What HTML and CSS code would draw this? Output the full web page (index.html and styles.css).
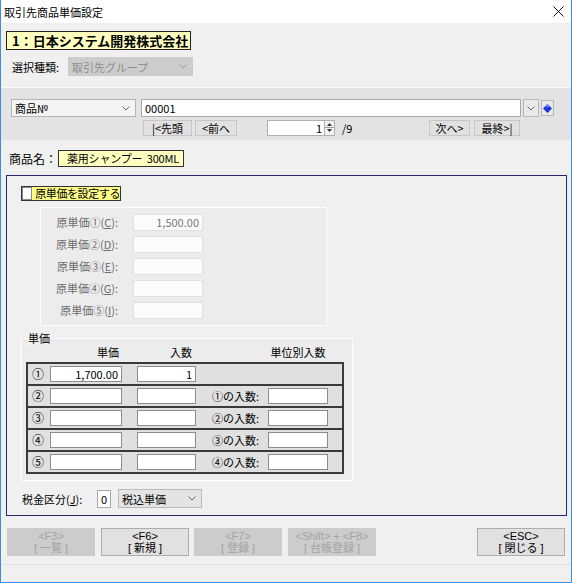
FILE: index.html
```html
<!DOCTYPE html>
<html lang="ja">
<head>
<meta charset="utf-8">
<title>取引先商品単価設定</title>
<link rel="stylesheet" href="styles.css">
</head>
<body>
<div class="win">
  <div class="titlebar">
    <span class="title">取引先商品単価設定</span>
    <svg class="close" width="11" height="11" viewBox="0 0 11 11"><path d="M0.5 0.5 L10.5 10.5 M10.5 0.5 L0.5 10.5" stroke="#111" stroke-width="1" fill="none"/></svg>
  </div>
  <div class="body">
    <div class="company">1：日本システム開発株式会社</div>
    <div class="selrow">
      <span class="sel-label">選択種類:</span>
      <div class="combo combo-dis"><span>取引先グループ</span><svg class="chev" width="8" height="5" viewBox="0 0 8 5"><polyline points="0.5,0.5 4,4 7.5,0.5" fill="none" stroke="#9a9a9a"/></svg></div>
    </div>
    <div class="navpanel">
      <div class="navrow1">
        <div class="combo combo-prod"><span>商品№</span><svg class="chev" width="8" height="5" viewBox="0 0 8 5"><polyline points="0.5,0.5 4,4 7.5,0.5" fill="none" stroke="#666"/></svg></div>
        <div class="code-input">00001</div>
        <div class="ddbtn"><svg width="8" height="5" viewBox="0 0 8 5"><polyline points="0.5,0.5 4,4 7.5,0.5" fill="none" stroke="#666"/></svg></div>
        <div class="diabtn"><svg width="9" height="9" viewBox="0 0 9 9"><polygon points="4.5,0 9,4.5 4.5,9 0,4.5" fill="#1a36d4"/><polygon points="4.5,0 6.5,2 4.5,3.5 2.5,2" fill="#6f8cff"/></svg></div>
      </div>
      <div class="navrow2">
        <div class="nbtn w49">|&lt;先頭</div>
        <div class="nbtn w42 ml3">&lt;前へ</div>
        <div class="numbox">
          <div class="numval">1</div>
          <div class="spin">
            <svg width="9" height="13" viewBox="0 0 9 13"><polygon points="4.5,2 7,5 2,5" fill="#333"/><line x1="0" y1="6.5" x2="9" y2="6.5" stroke="#999"/><polygon points="2,8 7,8 4.5,11" fill="#333"/></svg>
          </div>
        </div>
        <span class="total">/9</span>
        <div class="nbtn w41 ml67">次へ&gt;</div>
        <div class="nbtn w46 ml4">最終&gt;|</div>
      </div>
    </div>
    <div class="prodrow">
      <span class="prod-label">商品名：</span>
      <div class="prodname">薬用シャンプー&nbsp;&nbsp;300ML</div>
    </div>
    <div class="mainpanel">
      <div class="chk"><span class="box"></span><span class="chk-text">原単価を設定する</span></div>
      <div class="origgrp">
        <span class="olabel">原単価①(<u>C</u>):</span><div class="oinput">1,500.00</div>
        <span class="olabel">原単価②(<u>D</u>):</span><div class="oinput"></div>
        <span class="olabel">原単価③(<u>E</u>):</span><div class="oinput"></div>
        <span class="olabel">原単価④(<u>G</u>):</span><div class="oinput"></div>
        <span class="olabel">原単価⑤(<u>I</u>):</span><div class="oinput"></div>
      </div>
      <div class="tanka">
        <span class="legend">単価</span>
        <div class="thead">
          <span class="h1">単価</span>
          <span class="h2">入数</span>
          <span class="h3">単位別入数</span>
        </div>
        <div class="ttable">
          <div class="trow">
            <span class="num">①</span>
            <div class="tin in1">1,700.00</div>
            <div class="tin in2">1</div>
          </div>
          <div class="trow">
            <span class="num">②</span>
            <div class="tin in1"></div>
            <div class="tin in2"></div>
            <span class="tlabel">①の入数:</span>
            <div class="tin in3"></div>
          </div>
          <div class="trow">
            <span class="num">③</span>
            <div class="tin in1"></div>
            <div class="tin in2"></div>
            <span class="tlabel">②の入数:</span>
            <div class="tin in3"></div>
          </div>
          <div class="trow">
            <span class="num">④</span>
            <div class="tin in1"></div>
            <div class="tin in2"></div>
            <span class="tlabel">③の入数:</span>
            <div class="tin in3"></div>
          </div>
          <div class="trow">
            <span class="num">⑤</span>
            <div class="tin in1"></div>
            <div class="tin in2"></div>
            <span class="tlabel">④の入数:</span>
            <div class="tin in3"></div>
          </div>
        </div>
      </div>
      <div class="taxrow">
        <span class="tax-label">税金区分(<u>J</u>):</span>
        <div class="taxcode">0</div>
        <div class="combo combo-tax"><span>税込単価</span><svg class="chev" width="8" height="5" viewBox="0 0 8 5"><polyline points="0.5,0.5 4,4 7.5,0.5" fill="none" stroke="#666"/></svg></div>
      </div>
    </div>
    <div class="buttons">
      <div class="btn dis"><span>&lt;F3&gt;</span><span>[ 一覧 ]</span></div>
      <div class="btn"><span>&lt;F6&gt;</span><span>[ 新規 ]</span></div>
      <div class="btn dis gap5"><span>&lt;F7&gt;</span><span>[ 登録 ]</span></div>
      <div class="btn dis"><span>&lt;Shift&gt; + &lt;F8&gt;</span><span>[ 台帳登録 ]</span></div>
      <div class="btn esc"><span>&lt;ESC&gt;</span><span>[ 閉じる ]</span></div>
    </div>
    <div class="status"></div>
  </div>
</div>
</body>
</html>
```

FILE: styles.css
```css
* { box-sizing: border-box; }
html, body { margin: 0; padding: 0; }
body {
  font-family: "Noto Sans CJK JP", "Liberation Sans", sans-serif;
  font-size: 11px;
  color: #000;
  background: #f0f0f0;
}
.win {
  width: 572px;
  height: 583px;
  border: 1px solid #3b8fde;
  border-top: none;
  display: flex;
  flex-direction: column;
  background: #f0f0f0;
  overflow: hidden;
}
.titlebar {
  flex: none;
  height: 23px;
  background: #fff;
  display: flex;
  align-items: center;
  justify-content: space-between;
  padding: 0 7px 0 3px;
}
.title { font-size: 11px; line-height: 14px; }
.close { display: block; }
.body { flex: 1; display: flex; flex-direction: column; }

.company {
  margin: 8px 0 0 5px;
  width: 185px;
  height: 19px;
  background: #ffffc0;
  border: 1px solid #222;
  font-weight: bold;
  font-size: 13px;
  line-height: 17px;
  padding-left: 5px;
  white-space: nowrap;
}
.selrow {
  margin: 7px 0 0 11px;
  display: flex;
  align-items: center;
  height: 19px;
}
.sel-label { width: 56px; }
.combo {
  display: flex;
  align-items: center;
  justify-content: space-between;
  height: 19px;
  padding: 0 5px 0 3px;
  white-space: nowrap;
}
.chev { display: block; }
.combo-dis {
  width: 125px;
  background: #cccccc;
  border: 1px solid #cccccc;
  color: #8e8e8e;
}
.navpanel {
  flex: none;
  margin-top: 11px;
  height: 53px;
  background: #e3e3e3;
  border-top: 1px solid #fbfbfb;
  padding-top: 11px;
}
.navrow1 {
  display: flex;
  height: 18px;
  margin-left: 10px;
}
.combo-prod {
  width: 125px;
  height: 18px;
  background: #f4f4f4;
  border: 1px solid #b5b5b5;
}
.code-input {
  margin-left: 5px;
  width: 380px;
  background: #fff;
  border: 1px solid #a9a9a9;
  padding-left: 3px;
  line-height: 16px;
}
.ddbtn, .diabtn {
  margin-left: 2px;
  display: flex;
  align-items: center;
  justify-content: center;
  border: 1px solid #b9b9b9;
  background: #e9e9e9;
}
.ddbtn { width: 16px; }
.diabtn { width: 13px; height: 16px; margin-top: 1px; }
.navrow2 {
  display: flex;
  align-items: center;
  height: 15px;
  margin: 3px 0 0 142px;
}
.nbtn {
  height: 16px;
  background: #e1e1e1;
  border: 1px solid #c6c6c6;
  line-height: 14px;
  text-align: center;
  white-space: nowrap;
}
.w49 { width: 49px; }
.w42 { width: 42px; }
.w41 { width: 41px; }
.w46 { width: 46px; }
.ml3 { margin-left: 3px; }
.ml4 { margin-left: 4px; }
.ml67 { margin-left: 67px; }
.numbox {
  margin-left: 30px;
  display: flex;
  height: 16px;
}
.numval {
  width: 57px;
  background: #fff;
  border: 1px solid #b0b0b0;
  border-right: none;
  text-align: right;
  padding-right: 2px;
  line-height: 14px;
}
.spin {
  width: 11px;
  background: #f2f2f2;
  border: 1px solid #b0b0b0;
  display: flex;
  align-items: center;
  justify-content: center;
}
.spin svg { display: block; }
.total { margin-left: 7px; width: 20px; }

.prodrow {
  margin: 10px 0 0 8px;
  display: flex;
  align-items: center;
  height: 17px;
}
.prod-label { width: 49px; font-size: 12px; }
.prodname {
  width: 126px;
  height: 17px;
  background: #ffffc0;
  border: 1px solid #333;
  padding-left: 8px;
  line-height: 15px;
  white-space: nowrap;
  letter-spacing: -0.2px;
}

.mainpanel {
  flex: none;
  margin: 8px 0 0 5px;
  width: 561px;
  height: 341px;
  border: 1px solid #26266a;
  padding-top: 10px;
}
.chk {
  margin-left: 14px;
  width: 100px;
  height: 15px;
  background: #ffff88;
  border: 1px solid #333;
  display: flex;
  align-items: center;
}
.box {
  width: 12px;
  height: 13px;
  background: #fff;
  border: 1px solid #8a8a8a;
}
.chk-text { margin-left: 3px; line-height: 13px; white-space: nowrap; letter-spacing: -0.4px; }

.origgrp {
  margin: 6px 0 0 33px;
  width: 287px;
  height: 119px;
  border: 1px solid #fdfdfd;
  background: #ececec;
  padding-top: 6px;
  display: grid;
  grid-template-columns: 77px 70px;
  grid-auto-rows: 17px;
  column-gap: 15px;
  row-gap: 5px;
}
.olabel {
  text-align: right;
  color: #6d6d6d;
  line-height: 17px;
  white-space: nowrap;
}
.oinput {
  background: #fbfbfb;
  border: 1px solid #e0e0e0;
  color: #777;
  text-align: right;
  padding-right: 3px;
  line-height: 15px;
}

.tanka {
  margin: 12px 0 0 14px;
  width: 332px;
  height: 143px;
  border: 1px solid #fdfdfd;
  background: #ececec;
}
.legend {
  display: block;
  width: fit-content;
  margin: -8px 0 0 5px;
  padding: 0 1px;
  background: #f0f0f0;
  line-height: 14px;
}
.thead {
  display: flex;
  height: 15px;
  margin: 1px 0 0 4px;
  line-height: 13px;
}
.thead span { text-align: center; white-space: nowrap; }
.h1 { width: 24px; margin-left: 70px; }
.h2 { width: 24px; margin-left: 49px; }
.h3 { width: 56px; margin-left: 77px; }
.ttable {
  margin: 1px 0 0 4px;
  width: 318px;
  border: 2px solid #3a3a3a;
}
.trow {
  display: flex;
  align-items: center;
  height: 20px;
  background: #e0e0e0;
  padding-left: 4px;
}
.trow + .trow { border-top: 2px solid #3a3a3a; height: 22px; }
.num { width: 18px; line-height: 14px; font-size: 12px; }
.tin {
  height: 16px;
  background: #fff;
  border: 1px solid #8c8c8c;
  text-align: right;
  padding-right: 3px;
  line-height: 14px;
}
.in1 { width: 72px; }
.in2 { width: 59px; margin-left: 15px; }
.tlabel { width: 46px; margin-left: 16px; white-space: nowrap; }
.in3 { width: 60px; margin-left: 10px; }

.taxrow {
  margin: 8px 0 0 15px;
  display: flex;
  align-items: center;
  height: 19px;
}
.tax-label { width: 75px; white-space: nowrap; }
.taxcode {
  width: 14px;
  height: 18px;
  background: #fff;
  border: 1px solid #a9a9a9;
  text-align: center;
  line-height: 16px;
}
.combo-tax {
  margin-left: 7px;
  width: 84px;
  background: #e4e4e4;
  border: 1px solid #b9b9b9;
}

.buttons {
  flex: none;
  margin: 12px 0 0 6px;
  display: flex;
  height: 28px;
}
.btn {
  width: 88px;
  height: 28px;
  border: 1px solid #adadad;
  background: #e1e1e1;
  display: flex;
  flex-direction: column;
  align-items: center;
  justify-content: center;
  font-family: "Liberation Sans", "Noto Sans CJK JP", sans-serif;
  line-height: 12px;
  white-space: nowrap;
}
.btn span { display: block; height: 12px; }
.btn + .btn { margin-left: 6px; }
.btn.gap5 { margin-left: 5px; }
.btn.dis {
  background: #cccccc;
  border-color: #cccccc;
  color: #a3a3a3;
}
.btn.esc { margin-left: auto; margin-right: 6px; }
.status {
  flex: 1;
  margin-top: 8px;
  border-top: 1px solid #e2e2e2;
}
```
